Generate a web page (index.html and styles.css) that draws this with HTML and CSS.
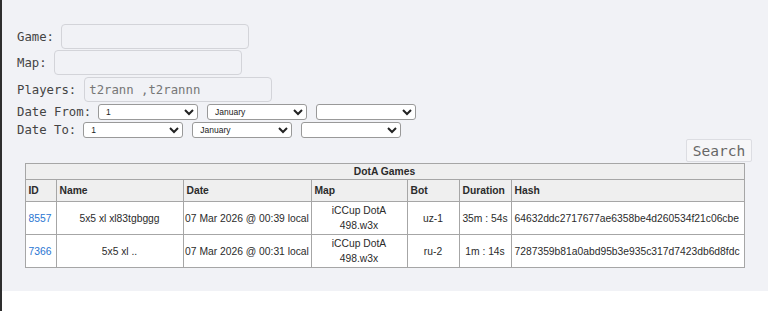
FILE: index.html
```html
<!DOCTYPE html>
<html lang="en">
<head>
  <meta charset="UTF-8">
  <meta name="viewport" content="width=device-width, initial-scale=1.0">
  <title>DotA Games</title>
  <link rel="stylesheet" href="styles.css">
</head>
<body>
  <div class="panel">
    <form class="filters">
      <div class="row row-game">
        <label for="game">Game:</label>
        <input type="text" id="game">
      </div>
      <div class="row row-map">
        <label for="map">Map:</label>
        <input type="text" id="map">
      </div>
      <div class="row row-players">
        <label for="players">Players:</label>
        <input type="text" id="players" value="t2rann ,t2rannn">
      </div>
      <div class="row row-date">
        <label>Date From:</label>
        <select><option>1</option></select>
        <select><option>January</option></select>
        <select><option></option></select>
      </div>
      <div class="row row-date row-to">
        <label>Date To:</label>
        <select><option>1</option></select>
        <select><option>January</option></select>
        <select><option></option></select>
      </div>
      <div class="actions">
        <button type="button">Search</button>
      </div>
    </form>

    <table class="games">
      <colgroup>
        <col style="width: 31px">
        <col style="width: 127px">
        <col style="width: 128px">
        <col style="width: 96px">
        <col style="width: 52px">
        <col style="width: 52px">
        <col>
      </colgroup>
      <thead>
        <tr><th class="caption" colspan="7">DotA Games</th></tr>
        <tr>
          <th>ID</th>
          <th>Name</th>
          <th>Date</th>
          <th>Map</th>
          <th>Bot</th>
          <th>Duration</th>
          <th>Hash</th>
        </tr>
      </thead>
      <tbody>
        <tr>
          <td class="left"><a href="#">8557</a></td>
          <td>5x5 xl xl83tgbggg</td>
          <td class="nowrap">07 Mar 2026 @ 00:39 local</td>
          <td>iCCup DotA 498.w3x</td>
          <td>uz-1</td>
          <td class="nowrap">35m : 54s</td>
          <td class="left">64632ddc2717677ae6358be4d260534f21c06cbe</td>
        </tr>
        <tr>
          <td class="left"><a href="#">7366</a></td>
          <td>5x5 xl ..</td>
          <td class="nowrap">07 Mar 2026 @ 00:31 local</td>
          <td>iCCup DotA 498.w3x</td>
          <td>ru-2</td>
          <td class="nowrap">1m : 14s</td>
          <td class="left">7287359b81a0abd95b3e935c317d7423db6d8fdc</td>
        </tr>
      </tbody>
    </table>
  </div>
</body>
</html>
```

FILE: styles.css
```css
html, body {
  margin: 0;
  background-color: white;
}
body {
  border-left: 2px solid #2e2e2e;
  min-height: 100vh;
  box-sizing: border-box;
}
.panel {
  background-color: #f1f2f6;
  padding: 24px 16px 23px 15px;
}
.filters {
  font-family: "DejaVu Sans Mono", "Liberation Mono", monospace;
  font-size: 12.3px;
  color: #444;
}
.row {
  display: flex;
  align-items: center;
  gap: 7px;
  margin-bottom: 2px;
}
.row-game {
  margin-bottom: 1px;
}
.row-to {
  margin-bottom: 1px;
}
.row input {
  width: 188px;
  height: 25px;
  box-sizing: border-box;
  padding: 0 4px;
  border: 1px solid #d3d4d9;
  border-radius: 4px;
  background-color: transparent;
  font-family: inherit;
  font-size: 12.3px;
  color: #777;
}
.row-players input {
  margin-left: 1px;
}
.row-date {
  gap: 9px;
}
.row-date label {
  margin-right: -2px;
}
.row-date select {
  width: 100px;
  height: 16px;
  box-sizing: border-box;
  padding: 0 3px;
  border: 1px solid #999;
  border-radius: 3px;
  background-color: white;
  font-family: "Liberation Sans", Arial, sans-serif;
  font-size: 8.5px;
  color: #222;
}
.actions {
  display: flex;
  justify-content: flex-end;
  margin-bottom: 1px;
}
.actions button {
  height: 23px;
  width: 66px;
  padding: 0;
  border: 1px solid #dcdde2;
  border-radius: 2px;
  background-color: #f6f6f8;
  font-family: "DejaVu Sans Mono", "Liberation Mono", monospace;
  font-size: 14.5px;
  color: #666;
}
.games {
  width: 720px;
  margin: 0 auto;
  table-layout: fixed;
  border-collapse: collapse;
  border: 1px solid #9d9d9d;
  background-color: white;
  font-family: "Liberation Sans", Arial, sans-serif;
  font-size: 10.3px;
  color: #2b2b2b;
}
.games th,
.games td {
  border: 1px solid #a6a6a6;
}
.games th {
  background-color: #efefef;
  text-align: left;
  padding: 3px 3px;
  line-height: 15px;
}
.games th.caption {
  text-align: center;
  padding: 0 3px;
}
.games td {
  text-align: center;
  padding: 1px 1px;
  line-height: 15px;
}
.games td.nowrap {
  white-space: nowrap;
}
.games td.left {
  text-align: left;
  padding-left: 3px;
}
.games a {
  color: #2a76d2;
  text-decoration: none;
}
```
